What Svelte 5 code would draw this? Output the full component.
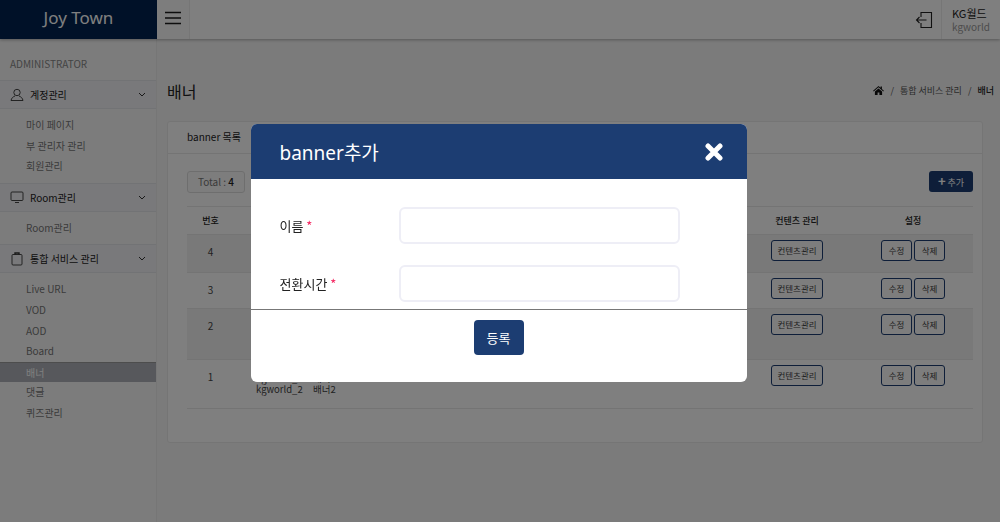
<script>
	const menu = [
		{ title: '계정관리', icon: 'user', items: ['마이 페이지', '부 관리자 관리', '회원관리'] },
		{ title: 'Room관리', icon: 'monitor', items: ['Room관리'] },
		{
			title: '통합 서비스 관리',
			icon: 'clip',
			items: ['Live URL', 'VOD', 'AOD', 'Board', '배너', '댓글', '퀴즈관리']
		}
	];

	const rows = [
		{ no: 4, height: 38, shade: true, ids: [], names: [] },
		{ no: 3, height: 36, shade: false, ids: [], names: [] },
		{ no: 2, height: 51, shade: true, ids: [], names: [] },
		{ no: 1, height: 49, shade: false, ids: ['kgworld_9', 'kgworld_2'], names: ['배너1', '배너2'] }
	];
</script>

<div class="page">
	<header class="topbar">
		<div class="logo">Joy Town</div>
		<button class="burger" aria-label="메뉴">
			<svg width="16" height="14" viewBox="0 0 16 14"><path d="M0 1.5h16M0 7h16M0 12.5h16" stroke="#1c1c1c" stroke-width="1.3" fill="none" /></svg>
		</button>
		<div class="spacer"></div>
		<svg class="logout" width="18" height="18" viewBox="0 0 18 18" fill="none" stroke="#222" stroke-width="1.1">
			<path d="M6 6V1.5h10.500v15H6V12" />
			<path d="M11.500 9H1.500M4.500 6l-3 3 3 3" />
		</svg>
		<div class="account">
			<strong>KG월드</strong>
			<span>kgworld</span>
		</div>
	</header>

	<div class="body">
		<aside class="sidebar">
			<p class="role">ADMINISTRATOR</p>
			{#each menu as group}
				<div class="group-head">
					<svg class="group-icon" width="14" height="14" viewBox="0 0 14 14" fill="none" stroke="#333" stroke-width="0.9">
						{#if group.icon === 'user'}
							<circle cx="7" cy="4.500" r="3.200" />
							<path d="M5 8C3 8.800 1.500 10 1 12.500h12C12.500 10 11 8.800 9 8" />
						{:else if group.icon === 'monitor'}
							<rect x="1" y="2" width="12" height="8.500" rx="1" />
							<path d="M5 12.500h4" />
						{:else}
							<rect x="2" y="2.500" width="10" height="10.500" rx="1" />
							<path d="M5 2.500V1h4v1.500" stroke-width="1.400" />
						{/if}
					</svg>
					<span>{group.title}</span>
					<svg class="chev" width="8" height="5" viewBox="0 0 8 5" fill="none" stroke="#333"><path d="M1 1l3 3 3-3" /></svg>
				</div>
				<ul>
					{#each group.items as item}
						<li class:active={item === '배너'}>{item}</li>
					{/each}
				</ul>
			{/each}
		</aside>

		<main class="content">
			<div class="title-row">
				<h1>배너</h1>
				<nav class="crumbs">
					<svg width="11" height="9" viewBox="0 0 12 10"><path d="M6 0L0 5.200l.700.800L6 1.500 11.300 6l.700-.800L9.800 3.300V.6H8.300v1.400zM2 6.200V10h3V7.200h2V10h3V6.200L6 2.800z" fill="#111" /></svg>
					<i>/</i><span>통합 서비스 관리</span><i>/</i><b>배너</b>
				</nav>
			</div>

			<section class="card">
				<div class="card-tab">banner 목록</div>
				<div class="card-body">
					<div class="toolbar">
						<div class="total">Total : <b>4</b></div>
						<button class="add"><span>+</span> 추가</button>
					</div>
					<table>
						<thead>
							<tr>
								<th class="c-no">번호</th>
								<th class="c-id"></th>
								<th class="c-name"></th>
								<th class="c-fill"></th>
								<th class="c-content">컨텐츠 관리</th>
								<th class="c-set">설정</th>
							</tr>
						</thead>
						<tbody>
							{#each rows as row}
								<tr class:shade={row.shade} style="height: {row.height}px">
									<td class="c-no">{row.no}</td>
									<td class="c-id">{#each row.ids as id}<div>{id}</div>{/each}</td>
									<td class="c-name">{#each row.names as name}<div>{name}</div>{/each}</td>
									<td></td>
									<td class="c-content"><button class="line">컨텐츠관리</button></td>
									<td class="c-set"><button class="line small">수정</button><button class="line small">삭제</button></td>
								</tr>
							{/each}
						</tbody>
					</table>
				</div>
			</section>
		</main>
	</div>
</div>

<div class="backdrop">
	<div class="modal">
		<div class="modal-head">
			<h2>banner추가</h2>
			<svg width="18" height="18" viewBox="0 0 18 18"><path d="M3 3l12 12M15 3L3 15" stroke="#fff" stroke-width="5" stroke-linecap="round" /></svg>
		</div>
		<form class="modal-body">
			<label class="field">
				<span>이름 <em>*</em></span>
				<input type="text" />
			</label>
			<label class="field">
				<span>전환시간 <em>*</em></span>
				<input type="text" />
			</label>
		</form>
		<div class="modal-foot">
			<button class="submit">등록</button>
		</div>
	</div>
</div>

<style>
	:global(body) {
		margin: 0;
		background: #f7f7f7;
		font-family: "Noto Sans CJK KR", "Noto Sans", sans-serif;
		overflow: hidden;
	}

	button {
		font-family: inherit;
		cursor: pointer;
	}

	.page {
		height: 522px;
		display: flex;
		flex-direction: column;
	}

	.topbar {
		height: 39px;
		display: flex;
		align-items: center;
		background: #fff;
		box-shadow: 0 1px 3px rgba(0, 0, 0, 0.3);
		position: relative;
		z-index: 1;
	}

	.logo {
		width: 157px;
		height: 100%;
		background: #002350;
		color: #fff;
		font-family: "Noto Sans", sans-serif;
		font-size: 17px;
		line-height: 36px;
		text-align: center;
	}

	.burger {
		width: 33px;
		height: 100%;
		padding: 0;
		background: #fafafa;
		border: none;
		border-right: 1px solid #ececec;
	}

	.spacer {
		flex: 1;
	}

	.logout {
		margin-right: 8px;
	}

	.account {
		width: 59px;
		height: 100%;
		padding-left: 10px;
		border-left: 1px solid #ececec;
		display: flex;
		flex-direction: column;
		justify-content: center;
		box-sizing: border-box;
		font-size: 10px;
		line-height: 14px;
		color: #999;
	}

	.account strong {
		font-weight: 400;
		font-size: 11px;
		color: #222;
	}

	.body {
		flex: 1;
		display: flex;
	}

	.sidebar {
		width: 157px;
		background: #f9f9f9;
		border-right: 1px solid #ececec;
		box-sizing: border-box;
		flex: none;
	}

	.role {
		margin: 0;
		padding: 18px 10px 0;
		height: 41px;
		box-sizing: border-box;
		font-size: 10px;
		line-height: 14px;
		color: #888;
	}

	.group-head {
		height: 28px;
		display: flex;
		align-items: center;
		gap: 6px;
		padding: 0 10px;
		background: #f2f3f6;
		border-top: 1px solid #e5e6ea;
		border-bottom: 1px solid #e5e6ea;
		font-size: 10px;
		color: #222;
		box-sizing: content-box;
		height: 27px;
	}

	.group-head span {
		flex: 1;
	}

	.chev {
		margin-right: 1px;
		margin-left: 0;
		position: relative;
		left: 1px;
	}

	ul {
		list-style: none;
		margin: 0;
		padding: 6px 0;
	}

	li {
		height: 20.600px;
		line-height: 20.600px;
		padding-left: 26px;
		font-size: 10px;
		color: #777;
	}

	li.active {
		background: #aeb1b8;
		color: #fff;
		border-top: 1px solid #9a9a9a;
		box-sizing: border-box;
	}

	.content {
		flex: 1;
		padding: 0 17px 0 10px;
		min-width: 0;
	}

	.title-row {
		height: 82px;
		display: flex;
		align-items: center;
		justify-content: space-between;
		padding-top: 21px;
		box-sizing: border-box;
	}

	h1 {
		margin: 0;
		font-size: 16px;
		font-weight: 400;
		color: #222;
	}

	.crumbs {
		display: flex;
		align-items: center;
		gap: 6px;
		margin-right: -11px;
		font-size: 9px;
		color: #555;
	}

	.crumbs i {
		font-style: normal;
	}

	.crumbs b {
		font-weight: 500;
		color: #222;
	}

	.card {
		height: 322px;
		background: #fff;
		border: 1px solid #eaeaea;
		border-radius: 3px;
		box-sizing: border-box;
	}

	.card-tab {
		height: 31px;
		padding-left: 19px;
		border-bottom: 1px solid #e8e8e8;
		font-size: 10px;
		line-height: 30px;
		color: #222;
	}

	.card-body {
		padding: 17px 9px 0 19px;
	}

	.toolbar {
		display: flex;
		justify-content: space-between;
		margin-bottom: 13px;
	}

	.total {
		width: 58px;
		height: 22px;
		box-sizing: border-box;
		background: #fafafa;
		border: 1px solid #ddd;
		border-radius: 3px;
		font-size: 10px;
		line-height: 20px;
		text-align: center;
		color: #777;
	}

	.total b {
		color: #222;
		font-weight: 500;
	}

	.add {
		width: 44px;
		height: 21px;
		padding: 0;
		background: #1c3d72;
		border: none;
		border-radius: 3px;
		color: #fff;
		font-size: 9px;
	}

	.add span {
		font-size: 13px;
		line-height: 1;
		font-weight: 700;
	}

	table {
		width: 786px;
		border-collapse: collapse;
		table-layout: fixed;
		font-size: 9px;
		color: #444;
	}

	th {
		height: 27px;
		padding: 0;
		font-weight: 500;
		color: #222;
		border-top: 1px solid #e8e8e8;
		border-bottom: 1px solid #e8e8e8;
	}

	td {
		padding: 5px 0 0;
		vertical-align: top;
		border-bottom: 1px solid #e8e8e8;
		box-sizing: border-box;
	}

	tr.shade {
		background: #f2f2f2;
	}

	.c-no {
		width: 47px;
		text-align: center;
	}

	.c-id {
		width: 22px;
	}

	td.c-id,
	td.c-name {
		line-height: 11px;
		white-space: nowrap;
		font-size: 9.500px;
	}

	td.c-id div,
	td.c-name div {
		position: relative;
		top: 8px;
	}

	.c-id {
		width: 79px;
		padding-left: 22px;
		box-sizing: border-box;
	}

	.c-name {
		width: 100px;
	}

	.c-content {
		width: 112px;
		text-align: center;
	}

	.c-set {
		width: 120px;
		text-align: center;
	}

	td.c-no {
		padding-top: 9px;
		font-size: 10px;
	}

	.line {
		height: 21px;
		width: 52px;
		padding: 0;
		background: #fafafa;
		border: 1px solid #1c3d72;
		border-radius: 3px;
		font-size: 8.500px;
		color: #444;
		line-height: 1;
	}

	.line.small {
		width: 31px;
	}

	.line.small + .line.small {
		margin-left: 2px;
	}

	.backdrop {
		position: fixed;
		inset: 0;
		z-index: 10;
		background: rgba(0, 0, 0, 0.5);
		display: flex;
		justify-content: center;
		padding: 124px 3px 0 0;
		box-sizing: border-box;
	}

	.modal {
		width: 496px;
		height: 258px;
		background: #fff;
		border-radius: 6px;
		overflow: hidden;
		display: flex;
		flex-direction: column;
	}

	.modal-head {
		height: 55px;
		flex: none;
		display: flex;
		align-items: center;
		justify-content: space-between;
		padding: 0 24px 0 29px;
		background: #1c3d72;
		color: #fff;
	}

	h2 {
		margin: 0;
		font-size: 19px;
		font-weight: 400;
		font-family: "Noto Sans", "Noto Sans CJK KR", sans-serif;
	}

	.modal-body {
		height: 131px;
		flex: none;
		padding: 28px 67px 0 29px;
		box-sizing: border-box;
		border-bottom: 1px solid #777;
	}

	.field {
		display: flex;
		align-items: center;
		justify-content: space-between;
		margin-bottom: 21px;
		font-size: 13px;
		color: #222;
	}

	.field input {
		width: 281px;
		height: 37px;
		box-sizing: border-box;
		border: 2px solid #eeeef6;
		border-radius: 6px;
		background: #fff;
	}

	.field em {
		color: #f5245f;
		font-style: normal;
	}

	.modal-foot {
		display: flex;
		justify-content: center;
		padding-top: 10px;
	}

	.submit {
		width: 50px;
		height: 35px;
		padding: 0;
		background: #1c3d72;
		border: none;
		border-radius: 4px;
		color: #fff;
		font-size: 13px;
	}
</style>
